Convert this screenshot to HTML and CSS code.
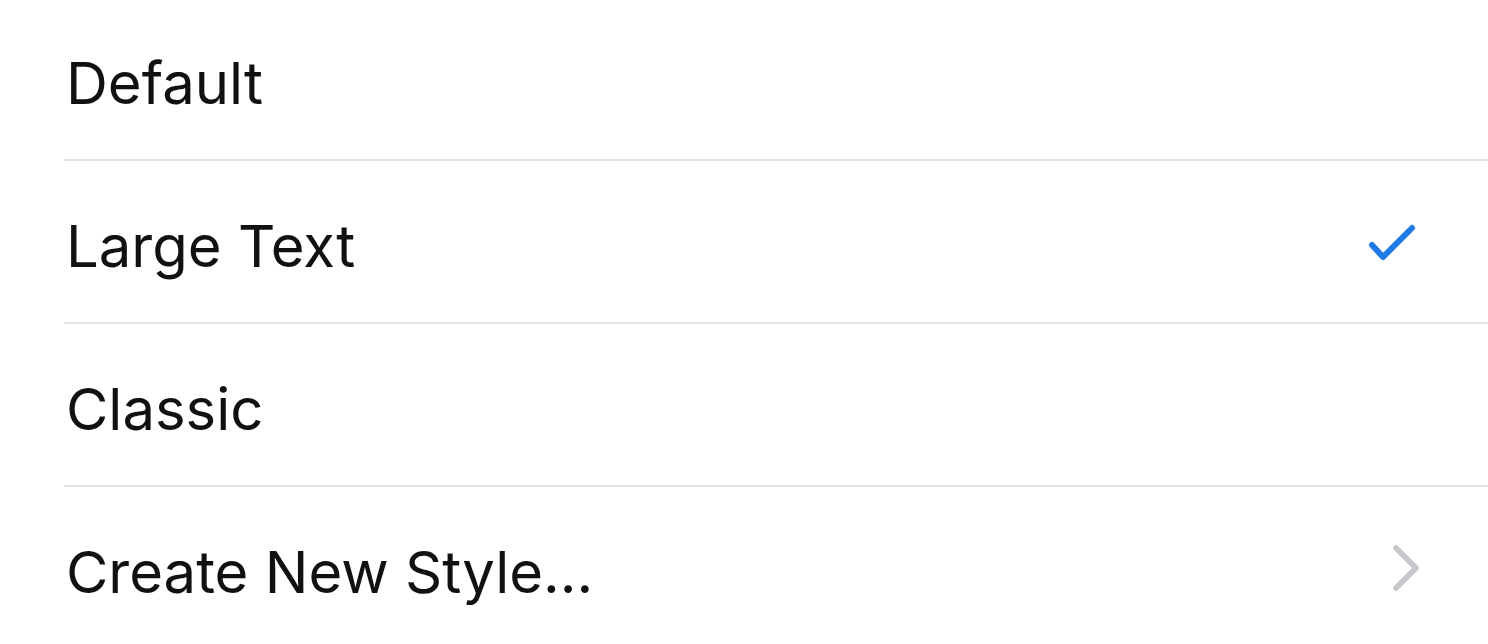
FILE: index.html
```html
<!DOCTYPE html>
<html>
<head>
<meta charset="utf-8">
<link rel="stylesheet" href="styles.css">
</head>
<body>
<ul class="list">
  <li class="row"><div class="cell"><span class="label">Default</span></div></li>
  <li class="row"><div class="cell"><span class="label">Large Text</span>
    <svg class="check" width="48" height="40" viewBox="0 0 48 40"><polyline points="4,22 15,34 44,5" fill="none" stroke="#1f7be6" stroke-width="6" stroke-linecap="round" stroke-linejoin="round"/></svg>
  </div></li>
  <li class="row"><div class="cell"><span class="label">Classic</span></div></li>
  <li class="row"><div class="cell"><span class="label">Create New Style...</span>
    <svg class="chevron" width="30" height="50" viewBox="0 0 30 50"><polyline points="6,5 26,25 6,45" fill="none" stroke="#c7c7cc" stroke-width="5.5" stroke-linecap="round" stroke-linejoin="round"/></svg>
  </div></li>
</ul>
</body>
</html>
```
FILE: styles.css
```css
html, body {
  margin: 0;
  padding: 0;
  background: #ffffff;
  overflow: hidden;
}
.list {
  list-style: none;
  margin: -2px 0 0 0;
  padding: 0;
  font-family: Inter, "Liberation Sans", sans-serif;
}
.row {
  padding-left: 64px;
}
.cell {
  height: 161px;
  border-bottom: 2px solid #e2e2e4;
  display: flex;
  align-items: center;
  justify-content: space-between;
  padding-right: 68px;
  box-sizing: content-box;
}
.label {
  font-size: 58px;
  line-height: 1;
  color: #111111;
  padding-top: 8px;
  margin-left: 2px;
}
.check {
  margin-right: 4px;
  margin-top: 2px;
}
.chevron {
  margin-right: 0;
}
```
